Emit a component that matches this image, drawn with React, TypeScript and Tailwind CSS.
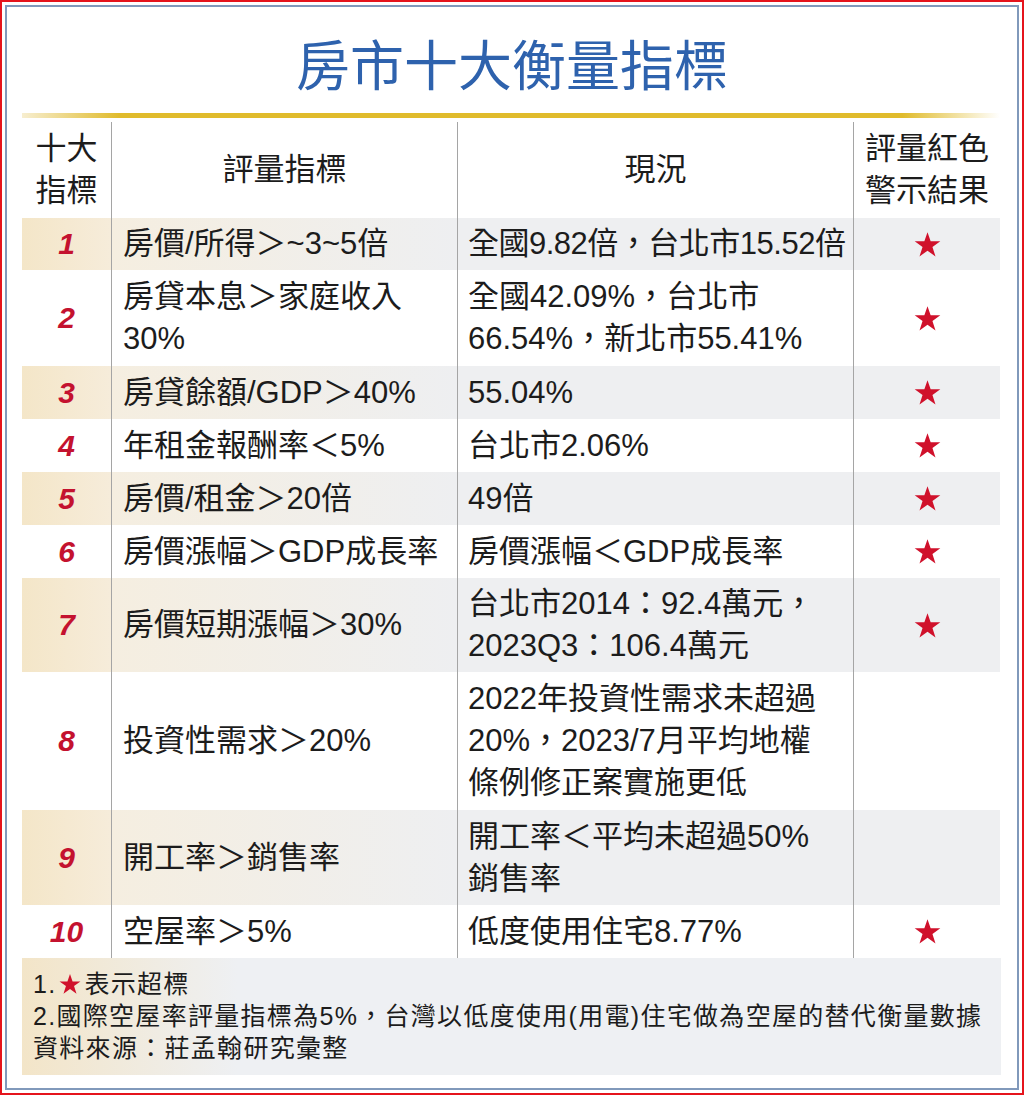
import React from "react";

type Row = {
    no: string;
    rule: string[];
    now: React.ReactNode[];
    star: boolean;
    h: string;
};

const rows: Row[] = [
    {
        no: "1",
        rule: ["房價/所得＞~3~5倍"],
        now: [<span className="tracking-[-0.5px]">全國9.82倍，台北市15.52倍</span>],
        star: true,
        h: "h-[52px]",
    },
    { no: "2", rule: ["房貸本息＞家庭收入", "30%"], now: ["全國42.09%，台北市", "66.54%，新北市55.41%"], star: true, h: "h-[96px]" },
    { no: "3", rule: ["房貸餘額/GDP＞40%"], now: ["55.04%"], star: true, h: "h-[53px]" },
    { no: "4", rule: ["年租金報酬率＜5%"], now: ["台北市2.06%"], star: true, h: "h-[53px]" },
    { no: "5", rule: ["房價/租金＞20倍"], now: ["49倍"], star: true, h: "h-[53px]" },
    { no: "6", rule: ["房價漲幅＞GDP成長率"], now: ["房價漲幅＜GDP成長率"], star: true, h: "h-[53px]" },
    { no: "7", rule: ["房價短期漲幅＞30%"], now: ["台北市2014：92.4萬元，", "2023Q3：106.4萬元"], star: true, h: "h-[94px]" },
    {
        no: "8",
        rule: ["投資性需求＞20%"],
        now: ["2022年投資性需求未超過", "20%，2023/7月平均地權", "條例修正案實施更低"],
        star: false,
        h: "h-[138px]",
    },
    { no: "9", rule: ["開工率＞銷售率"], now: ["開工率＜平均未超過50%", "銷售率"], star: false, h: "h-[95px]" },
    { no: "10", rule: ["空屋率＞5%"], now: ["低度使用住宅8.77%"], star: true, h: "h-[53px]" },
];

function Star({ size }: { size: number }) {
    return (
        <svg width={size} height={size} viewBox="0 0 24 24" className="inline-block">
            <polygon
                points="12,1 14.8,9.2 23.4,9.2 16.4,14.3 19.1,22.6 12,17.5 4.9,22.6 7.6,14.3 0.6,9.2 9.2,9.2"
                fill="#d0112b"
            />
        </svg>
    );
}

export default function App() {
    return (
        <div className="w-[1024px] h-[1095px] border-2 border-[#e5141c] p-[3px] bg-white font-['Liberation_Sans','Noto_Sans_CJK_TC',sans-serif] text-[#1c1c1c]">
            <div className="h-full border-2 border-[#8199bb] px-[15px]">
                <div className="h-[106px] flex items-center justify-center pt-[6px]">
                    <h1 className="font-['Noto_Sans_CJK_TC',sans-serif] font-normal text-[54px] leading-none text-[#2e62ad]">
                        房市十大衡量指標
                    </h1>
                </div>
                <div className="w-[978px] h-[5px] bg-[linear-gradient(to_right,#f7eed0,#e0bb2c_10%,#e0bb2c_90%,#ffffff)]" />

                <div className="w-[978px] mt-[4px] text-[31px] leading-[42px]">
                    <div className="flex h-[96px]">
                        <div className="w-[90px] border-r border-[#a5a5a5] flex items-center justify-center text-center">
                            十大
                            <br />
                            指標
                        </div>
                        <div className="w-[346px] border-r border-[#a5a5a5] flex items-center justify-center">評量指標</div>
                        <div className="w-[396px] border-r border-[#a5a5a5] flex items-center justify-center">現況</div>
                        <div className="w-[146px] flex items-center justify-center text-center">
                            評量紅色
                            <br />
                            警示結果
                        </div>
                    </div>

                    {rows.map((r, i) => {
                        const shaded = i % 2 === 0;
                        return (
                            <div key={r.no} className={`flex ${r.h}`}>
                                <div
                                    className={`w-[90px] border-r border-[#a5a5a5] flex items-center justify-center font-bold italic text-[30px] text-[#c4122f] ${
                                        shaded ? "bg-[linear-gradient(to_right,#f4e6c8,#f6ecda)]" : ""
                                    }`}
                                >
                                    {r.no}
                                </div>
                                <div
                                    className={`w-[346px] border-r border-[#a5a5a5] flex flex-col justify-center pl-[11px] whitespace-nowrap ${
                                        shaded ? "bg-[linear-gradient(to_right,#f5eee0,#eeeff1)]" : ""
                                    }`}
                                >
                                    {r.rule.map((t) => (
                                        <div key={t}>{t}</div>
                                    ))}
                                </div>
                                <div
                                    className={`w-[396px] border-r border-[#a5a5a5] flex flex-col justify-center pl-[10px] whitespace-nowrap ${
                                        shaded ? "bg-[#eeeff1]" : ""
                                    }`}
                                >
                                    {r.now.map((t, j) => (
                                        <div key={j}>{t}</div>
                                    ))}
                                </div>
                                <div className={`w-[146px] flex items-center justify-center ${shaded ? "bg-[#eeeff1]" : ""}`}>
                                    {r.star && <Star size={27} />}
                                </div>
                            </div>
                        );
                    })}
                </div>

                <div className="w-[979px] h-[117px] pt-[10px] pl-[11px] text-[25px] leading-[32px] tracking-[1.3px] whitespace-nowrap bg-[linear-gradient(to_right,#f3e5c8,#eef0f3_22%)]">
                    <div className="flex items-center">
                        1.
                        <span className="mx-[3px] flex items-center">
                            <Star size={22} />
                        </span>
                        表示超標
                    </div>
                    <div>2.國際空屋率評量指標為5%，台灣以低度使用(用電)住宅做為空屋的替代衡量數據</div>
                    <div>資料來源：莊孟翰研究彙整</div>
                </div>
            </div>
        </div>
    );
}
